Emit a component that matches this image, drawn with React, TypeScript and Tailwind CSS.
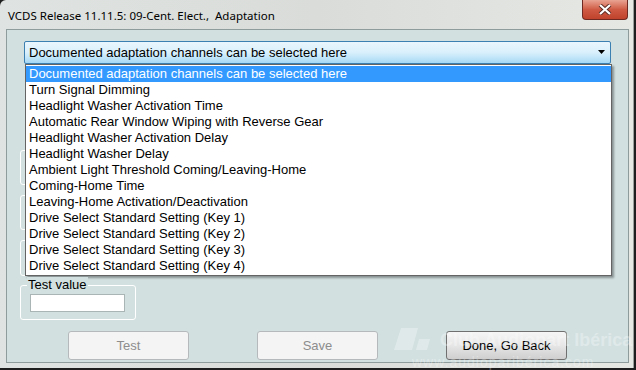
import React from "react";

const items = [
  "Documented adaptation channels can be selected here",
  "Turn Signal Dimming",
  "Headlight Washer Activation Time",
  "Automatic Rear Window Wiping with Reverse Gear",
  "Headlight Washer Activation Delay",
  "Headlight Washer Delay",
  "Ambient Light Threshold Coming/Leaving-Home",
  "Coming-Home Time",
  "Leaving-Home Activation/Deactivation",
  "Drive Select Standard Setting (Key 1)",
  "Drive Select Standard Setting (Key 2)",
  "Drive Select Standard Setting (Key 3)",
  "Drive Select Standard Setting (Key 4)",
];

function Btn({ label, primary }: { label: string; primary?: boolean }) {
  return (
    <div
      className={
        primary
          ? "w-[121px] h-[29px] rounded-[3px] border border-[#707070] bg-gradient-to-b from-[#f6f6f6] via-[#e6e6e6] to-[#cfcfcf] flex items-center justify-center text-[13px] text-black"
          : "w-[121px] h-[29px] rounded-[3px] border border-[#b5b9bc] bg-[#f4f4f4] flex items-center justify-center text-[13px] text-[#8d8d8d]"
      }
    >
      {label}
    </div>
  );
}

export default function App() {
  return (
    <div
      className="relative w-[636px] h-[370px] overflow-hidden bg-[#1e1e1e]"
      style={{ fontFamily: '"Liberation Sans", Arial, sans-serif' }}
    >
      {/* window frame */}
      <div className="flex flex-col w-[634px] h-[368px] rounded-tl-[6px] bg-gradient-to-r from-[#dfe3e1] via-[#d9dcd9] to-[#e6e8e4] border-r border-[#9aa09c]">
        {/* title bar */}
        <div className="h-[29px] flex items-start justify-between pl-[8px] pr-[5px]">
          <span
            className="mt-[7px] text-[11.5px] text-black"
            style={{ fontFamily: '"Noto Sans", "Liberation Sans", sans-serif' }}
          >
            VCDS Release 11.11.5: 09-Cent. Elect.,&nbsp; Adaptation
          </span>
          <div className="w-[46px] h-[20px] rounded-b-[4px] border border-[#6e2a22] border-t-0 bg-gradient-to-b from-[#e8a392] via-[#cf5a44] to-[#c0422c] flex items-center justify-center">
            <svg width="14" height="11" viewBox="0 0 14 11">
              <path d="M2 1 L12 10 M12 1 L2 10" stroke="#5a2a22" strokeWidth="4" />
              <path d="M2 1 L12 10 M12 1 L2 10" stroke="#ffffff" strokeWidth="2.2" />
            </svg>
          </div>
        </div>
        {/* client area */}
        <div className="relative ml-[6px] mr-[4px] h-[334px] border border-[#8f9c9c] bg-[#d2e0e0] flex flex-col pl-[13px] pt-[11px]">
          {/* combobox */}
          <div className="relative ml-[4px] w-[587px] h-[23px] rounded-[2px] border border-[#3c7fb1] bg-gradient-to-b from-[#eaf6fd] via-[#d9f0fc] to-[#a7d9f5] flex items-center justify-between pl-[4px] pr-[4px]">
            <span className="text-[13px] text-black">Documented adaptation channels can be selected here</span>
            <svg width="8" height="5" viewBox="0 0 8 5">
              <path d="M0 0 H7 L3.5 4 Z" fill="#000" />
            </svg>
          </div>

          {/* group boxes (mostly hidden behind the open list) */}
          <div className="mt-[86px] flex flex-col gap-[10px]">
            <div className="w-[200px] h-[35px] rounded-[3px] border border-white" />
            <div className="w-[200px] h-[35px] rounded-[3px] border border-white" />
            <div className="w-[200px] h-[36px] rounded-[3px] border border-white flex items-end justify-end pr-[31px]">
              <div className="w-[37px] h-[25px] rounded-[2px] border border-[#a0a8a8] bg-[#f4f4f4]" />
            </div>
          </div>

          {/* test value group */}
          <div className="mt-[1px] flex flex-col w-[116px]">
            <div className="ml-[7px] px-[1px] self-start text-[13px] leading-[16px] text-black relative z-[1] bg-[#d2e0e0]">
              Test value
            </div>
            <div className="-mt-[8px] h-[35px] rounded-[3px] border border-white pt-[8px] pl-[9px]">
              <div className="w-[95px] h-[18px] border border-[#a9b5b5] bg-white" />
            </div>
          </div>

          {/* buttons */}
          <div className="mt-[11px] ml-[48px] flex gap-[68px]">
            <Btn label="Test" />
            <Btn label="Save" />
            <Btn label="Done, Go Back" primary />
          </div>

          {/* open dropdown list */}
          <div className="absolute left-[18px] top-[34px] w-[587px] border border-[#646464] bg-white shadow-[2px_2px_2px_rgba(0,0,0,0.35)] flex flex-col py-[1px]">
            {items.map((t, i) => (
              <div
                key={i}
                className={
                  i === 0
                    ? "h-[16px] leading-[16px] pl-[3px] text-[13px] bg-[#3399ff] text-white"
                    : "h-[16px] leading-[16px] pl-[3px] text-[13px] text-black"
                }
              >
                {t}
              </div>
            ))}
          </div>
        </div>
      </div>

      {/* watermark */}
      <div className="absolute left-[392px] top-[328px] flex flex-col items-start opacity-30 pointer-events-none">
        <div className="flex items-center gap-[8px]">
          <svg width="40" height="24" viewBox="0 0 40 24">
            <path d="M9 0 H26 L20 22 H2 Z" fill="#ffffff" />
            <path d="M27 11 H38 L35 22 H24 Z" fill="#ffffff" />
          </svg>
          <span className="text-[18px] leading-[24px] font-bold text-white whitespace-nowrap">Club Audiopart Ibérica</span>
        </div>
        <span className="mt-[2px] ml-[20px] text-[14px] leading-[16px] text-white tracking-[1px] whitespace-nowrap">
          www.audioparibérica.com
        </span>
      </div>
    </div>
  );
}
